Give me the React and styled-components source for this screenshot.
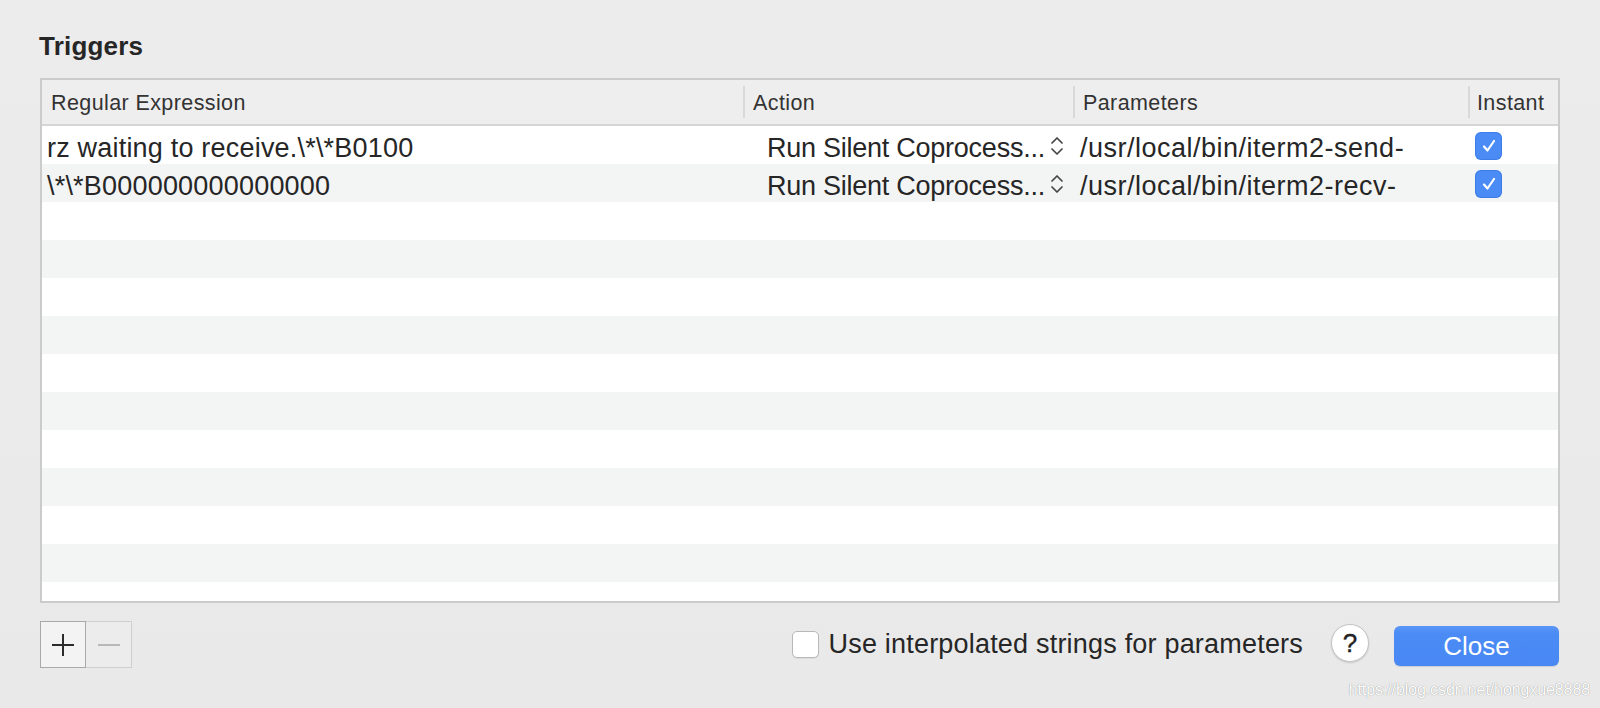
import React from "react";
import styled, { createGlobalStyle } from "styled-components";

const Global = createGlobalStyle`
  html, body { margin: 0; padding: 0; background: #ebebeb; }
  body { font-family: "Liberation Sans", Arial, sans-serif; color: #262626; }
  #root { height: 708px; overflow: hidden; }
`;

const Page = styled.div`
  position: relative;
  height: 708px;
  padding: 31px 40px 0 40px;
  box-sizing: border-box;
  background: linear-gradient(#ececec, #e9e9e9);
`;

const Title = styled.h1`
  margin: 0 0 17px -1px;
  font-size: 26px;
  line-height: 30px;
  font-weight: 700;
  letter-spacing: 0.2px;
  color: #262626;
`;

const Table = styled.div`
  border: 2px solid #cbcbcb;
  height: 525px;
  box-sizing: border-box;
  background: #fff;
  overflow: hidden;
  display: flex;
  flex-direction: column;
`;

const cols = "701px 330px 395px 1fr";

const HeaderRow = styled.div`
  display: grid;
  grid-template-columns: ${cols};
  height: 44px;
  background: #eeeeee;
  border-bottom: 2px solid #d6d6d6;
  flex: none;
`;

const HeaderCell = styled.div`
  position: relative;
  display: flex;
  align-items: center;
  padding-left: ${(p) => p.$pad}px;
  padding-top: 2px;
  font-size: 21.5px;
  letter-spacing: 0.4px;
  color: #333;
  ${(p) =>
    p.$sep &&
    `&::before { content: ""; position: absolute; left: 0; top: 6px; bottom: 6px; width: 2px; background: #d9d9d9; }`}
`;

const Row = styled.div`
  display: grid;
  grid-template-columns: ${cols};
  height: 38px;
  flex: none;
  background: ${(p) => (p.$alt ? "#f3f4f4" : "#ffffff")};
`;

const Cell = styled.div`
  display: flex;
  align-items: center;
  padding-left: ${(p) => p.$pad}px;
  padding-top: 6px;
  font-size: 27px;
  letter-spacing: ${(p) => p.$ls ?? 0.2}px;
  color: #262626;
  white-space: nowrap;
  overflow: hidden;
`;

const Chevrons = styled.svg`
  width: 16px;
  height: 24px;
  margin-left: 4px;
  margin-top: -4px;
  flex: none;
`;

const BlueCheck = styled.div`
  width: 27px;
  height: 28px;
  margin-top: -4px;
  border-radius: 6px;
  background: #4a8bf5;
  display: flex;
  align-items: center;
  justify-content: center;
  box-shadow: inset 0 0 0 1px rgba(40, 100, 210, 0.35);
`;

const Bottom = styled.div`
  display: flex;
  justify-content: space-between;
  align-items: center;
  margin-top: 18px;
  padding-right: 1px;
`;

const Segmented = styled.div`
  display: flex;
`;

const SegButton = styled.div`
  width: 46px;
  height: 47px;
  box-sizing: border-box;
  display: flex;
  align-items: center;
  justify-content: center;
  background: ${(p) => (p.$active ? "#f3f3f3" : "#ececec")};
  border: 1px solid ${(p) => (p.$active ? "#a9a9a9" : "#cfcfcf")};
  ${(p) => !p.$active && "border-left: none;"}
`;

const Right = styled.div`
  display: flex;
  align-items: center;
`;

const CheckLabel = styled.label`
  display: flex;
  align-items: center;
  font-size: 27px;
  letter-spacing: 0.2px;
  color: #262626;
  gap: 9px;
  margin-right: 28px;
`;

const EmptyBox = styled.span`
  width: 27px;
  height: 27px;
  box-sizing: border-box;
  border-radius: 5px;
  background: #fff;
  border: 1px solid #b8b8b8;
  box-shadow: 0 1px 1px rgba(0, 0, 0, 0.06);
`;

const Help = styled.div`
  width: 38px;
  height: 38px;
  box-sizing: border-box;
  border-radius: 50%;
  background: #fff;
  border: 1px solid #c4c4c4;
  box-shadow: 0 1px 2px rgba(0, 0, 0, 0.15);
  display: flex;
  align-items: center;
  justify-content: center;
  font-size: 26px;
  font-weight: 500;
  color: #222;
  margin-right: 25px;
  margin-top: -3px;
  -webkit-text-stroke: 0.4px #222;
`;

const CloseButton = styled.div`
  width: 165px;
  height: 40px;
  border-radius: 6px;
  background: linear-gradient(#5a96f7, #4a8bf5 20%, #4988f4);
  color: #fff;
  font-size: 26px;
  display: flex;
  align-items: center;
  justify-content: center;
  margin-top: 3px;
  box-shadow: 0 1px 1px rgba(0, 0, 0, 0.12);
`;

const Watermark = styled.div`
  position: absolute;
  right: 10px;
  bottom: 9px;
  font-size: 16px;
  color: #fdfdfd;
  text-shadow: 0 0 1px rgba(0, 0, 0, 0.45);
  letter-spacing: -0.1px;
`;

const Check = () => (
  <svg width="16" height="16" viewBox="0 0 16 16">
    <path d="M3 8.5 L6.5 12.5 L13 3" fill="none" stroke="#fff" strokeWidth="2.2" strokeLinecap="round" strokeLinejoin="round" />
  </svg>
);

const UpDown = () => (
  <Chevrons viewBox="0 0 16 24">
    <path d="M3 9 L8 4 L13 9" fill="none" stroke="#444" strokeWidth="1.7" strokeLinecap="round" strokeLinejoin="round" />
    <path d="M3 15 L8 20 L13 15" fill="none" stroke="#444" strokeWidth="1.7" strokeLinecap="round" strokeLinejoin="round" />
  </Chevrons>
);

const data = [
  { re: "rz waiting to receive.\\*\\*B0100", action: "Run Silent Coprocess...", param: "/usr/local/bin/iterm2-send-" },
  { re: "\\*\\*B000000000000000", action: "Run Silent Coprocess...", param: "/usr/local/bin/iterm2-recv-" },
];

export default function App() {
  const rows = Array.from({ length: 13 }, (_, i) => data[i] || null);
  return (
    <Page>
      <Global />
      <Title>Triggers</Title>
      <Table>
        <HeaderRow>
          <HeaderCell $pad={9}>Regular Expression</HeaderCell>
          <HeaderCell $pad={10} $sep>Action</HeaderCell>
          <HeaderCell $pad={10} $sep>Parameters</HeaderCell>
          <HeaderCell $pad={9} $sep>Instant</HeaderCell>
        </HeaderRow>
        {rows.map((r, i) => (
          <Row key={i} $alt={i % 2 === 1}>
            {r ? (
              <>
                <Cell $pad={5}>{r.re}</Cell>
                <Cell $pad={24} $ls={-0.25}>
                  {r.action}
                  <UpDown />
                </Cell>
                <Cell $pad={7} $ls={0.5}>{r.param}</Cell>
                <Cell $pad={7}>
                  <BlueCheck>
                    <Check />
                  </BlueCheck>
                </Cell>
              </>
            ) : null}
          </Row>
        ))}
      </Table>
      <Bottom>
        <Segmented>
          <SegButton $active>
            <svg width="24" height="24" viewBox="0 0 24 24">
              <path d="M12 1 V23 M1 12 H23" stroke="#2b2b2b" strokeWidth="2" />
            </svg>
          </SegButton>
          <SegButton>
            <svg width="24" height="24" viewBox="0 0 24 24">
              <path d="M1 12 H23" stroke="#b8b8b8" strokeWidth="2" />
            </svg>
          </SegButton>
        </Segmented>
        <Right>
          <CheckLabel>
            <EmptyBox />
            Use interpolated strings for parameters
          </CheckLabel>
          <Help>?</Help>
          <CloseButton>Close</CloseButton>
        </Right>
      </Bottom>
      <Watermark>https://blog.csdn.net/hongxue8888</Watermark>
    </Page>
  );
}
